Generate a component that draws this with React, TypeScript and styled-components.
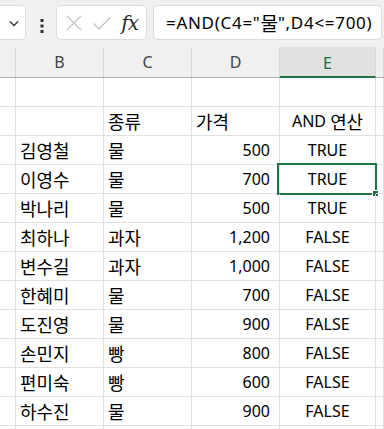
import styled, { createGlobalStyle } from "styled-components";

const GlobalStyle = createGlobalStyle`
  html, body {
    margin: 0;
    padding: 0;
    background: #ffffff;
    overflow: hidden;
  }
  body {
    font-family: "Noto Sans", "Noto Sans CJK KR", sans-serif;
    color: #000;
  }
`;

const GRID = "16px 88px 88px 88px 96px 1fr";
const LINE = "#e1e1e1";
const GREEN = "#217346";

const Page = styled.div`
  width: 384px;
  height: 429px;
  overflow: hidden;
  background: #ffffff;
`;

const Toolbar = styled.div`
  height: 47px;
  background: #f0f0f0;
  display: flex;
  align-items: flex-start;
  padding-top: 5px;
  box-sizing: border-box;
`;

const Box = styled.div<{ $w?: number }>`
  height: 35px;
  box-sizing: border-box;
  background: #ffffff;
  border: 1px solid #dcdcdc;
  border-radius: 5px;
  display: flex;
  align-items: center;
  ${(p) => (p.$w ? `width: ${p.$w}px;` : "flex: 1;")}
`;

const NameBox = styled(Box)`
  margin-left: -10px;
  justify-content: flex-end;
  padding-right: 5px;
`;

const Dots = styled.div`
  width: 28px;
  display: flex;
  justify-content: center;
  align-self: center;
  padding-left: 2px;
`;

const FxBox = styled(Box)`
  padding: 0 5px 0 8px;
  justify-content: space-between;
`;

const FxText = styled.span`
  font-family: "DejaVu Serif", "Liberation Serif", serif;
  font-style: italic;
  font-size: 20px;
  color: #2b2b2b;
  letter-spacing: -1px;
  padding-right: 3px;
`;

const FormulaBox = styled(Box)`
  margin-left: 6px;
  margin-right: 2px;
  padding-left: 12px;
  font-size: 17px;
  letter-spacing: 0.7px;
  white-space: nowrap;
  overflow: hidden;
`;

const Ko = styled.span`
  font-family: "Noto Sans CJK KR", sans-serif;
  font-size: 1.12em;
  font-weight: 400;
  letter-spacing: 0;
`;

const Row = styled.div<{ $h: number }>`
  display: grid;
  grid-template-columns: ${GRID};
  height: ${(p) => p.$h}px;
`;

const HeaderRow = styled(Row)`
  background: #f0f0f0;
  border-bottom: 1px solid #b4b4b4;
`;

const HeadCell = styled.div<{ $active?: boolean }>`
  box-sizing: border-box;
  border-right: 1px solid #d6d6d6;
  display: flex;
  align-items: center;
  justify-content: center;
  font-size: 16px;
  color: ${(p) => (p.$active ? "#1e6c41" : "#444")};
  background: ${(p) => (p.$active ? "#e1e1e1" : "transparent")};
  border-bottom: ${(p) => (p.$active ? `2px solid ${GREEN}` : "0")};
  margin-bottom: ${(p) => (p.$active ? "-1px" : "0")};
  padding-top: ${(p) => (p.$active ? "2px" : "0")};
`;

const Cell = styled.div<{ $align?: "left" | "right" | "center"; $selected?: boolean }>`
  position: relative;
  box-sizing: border-box;
  border-right: 1px solid ${LINE};
  border-bottom: 1px solid ${LINE};
  display: flex;
  align-items: center;
  font-size: 16px;
  white-space: nowrap;
  justify-content: ${(p) =>
    p.$align === "right" ? "flex-end" : p.$align === "center" ? "center" : "flex-start"};
  padding: ${(p) => (p.$align === "right" ? "0 9px 0 0" : p.$align === "center" ? "0" : "0 0 0 4px")};
  ${(p) =>
    p.$selected &&
    `
    &::before {
      content: "";
      position: absolute;
      left: -3px;
      top: -2px;
      right: -2px;
      bottom: -2px;
      border: 2px solid ${GREEN};
      pointer-events: none;
    }
    &::after {
      content: "";
      position: absolute;
      right: -4px;
      bottom: -4px;
      width: 5px;
      height: 5px;
      background: ${GREEN};
      border: 1px solid #fff;
    }
  `}
`;

const Chevron = () => (
  <svg width="12" height="12" viewBox="0 0 12 12">
    <path d="M2 4.5 L6 8.5 L10 4.5" fill="none" stroke="#333" strokeWidth="1.3" />
  </svg>
);

const VDots = () => (
  <svg width="4" height="14" viewBox="0 0 4 14">
    <rect x="0.5" y="0" width="3" height="3" fill="#333" />
    <rect x="0.5" y="5.5" width="3" height="3" fill="#333" />
    <rect x="0.5" y="11" width="3" height="3" fill="#333" />
  </svg>
);

const CrossIcon = () => (
  <svg width="18" height="18" viewBox="0 0 18 18">
    <path d="M2 2 L16 16 M16 2 L2 16" stroke="#c4c4c4" strokeWidth="1.3" fill="none" />
  </svg>
);

const CheckIcon = () => (
  <svg width="20" height="18" viewBox="0 0 20 18">
    <path d="M1.5 9.5 L7 15 L18.5 3" stroke="#c4c4c4" strokeWidth="1.3" fill="none" />
  </svg>
);

const columns = ["B", "C", "D", "E"];

const data: [string, string, string, string][] = [
  ["김영철", "물", "500", "TRUE"],
  ["이영수", "물", "700", "TRUE"],
  ["박나리", "물", "500", "TRUE"],
  ["최하나", "과자", "1,200", "FALSE"],
  ["변수길", "과자", "1,000", "FALSE"],
  ["한혜미", "물", "700", "FALSE"],
  ["도진영", "물", "900", "FALSE"],
  ["손민지", "빵", "800", "FALSE"],
  ["편미숙", "빵", "600", "FALSE"],
  ["하수진", "물", "900", "FALSE"],
];

const EmptyRow = () => (
  <Row $h={29}>
    <Cell />
    <Cell />
    <Cell />
    <Cell />
    <Cell />
    <Cell />
  </Row>
);

export default function App() {
  return (
    <Page>
      <GlobalStyle />
      <Toolbar>
        <NameBox $w={36}>
          <Chevron />
        </NameBox>
        <Dots>
          <VDots />
        </Dots>
        <FxBox $w={91}>
          <CrossIcon />
          <CheckIcon />
          <FxText>fx</FxText>
        </FxBox>
        <FormulaBox>
          =AND(C4="<Ko>물</Ko>",D4&lt;=700)
        </FormulaBox>
      </Toolbar>

      <HeaderRow $h={30}>
        <HeadCell />
        {columns.map((c) => (
          <HeadCell key={c} $active={c === "E"}>
            {c}
          </HeadCell>
        ))}
        <HeadCell />
      </HeaderRow>

      <EmptyRow />
      <Row $h={29}>
        <Cell />
        <Cell />
        <Cell>
          <Ko>종류</Ko>
        </Cell>
        <Cell>
          <Ko>가격</Ko>
        </Cell>
        <Cell $align="center">
          AND&nbsp;<Ko>연산</Ko>
        </Cell>
        <Cell />
      </Row>
      {data.map((r, i) => (
        <Row $h={29} key={r[0]}>
          <Cell />
          <Cell>
            <Ko>{r[0]}</Ko>
          </Cell>
          <Cell>
            <Ko>{r[1]}</Ko>
          </Cell>
          <Cell $align="right">{r[2]}</Cell>
          <Cell $align="center" $selected={i === 1}>
            {r[3]}
          </Cell>
          <Cell />
        </Row>
      ))}
      <EmptyRow />
    </Page>
  );
}
